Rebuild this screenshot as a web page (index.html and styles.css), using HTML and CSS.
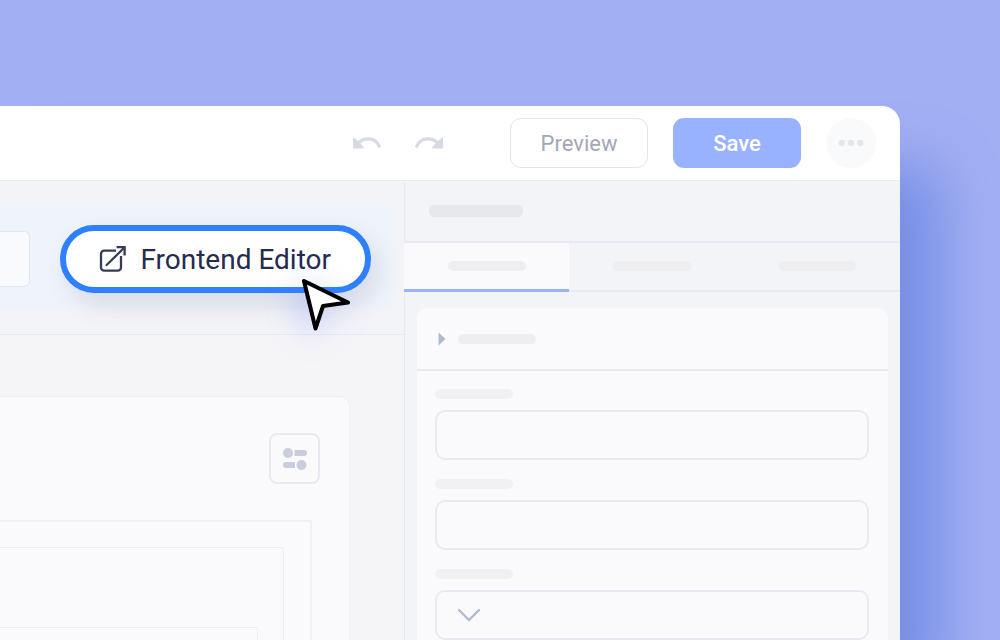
FILE: index.html
```html
<!DOCTYPE html>
<html lang="en">
<head>
    <meta charset="UTF-8">
    <meta name="viewport" content="width=device-width, initial-scale=1.0">
    <title>Frontend Editor</title>
    <link rel="stylesheet" href="styles.css">
</head>
<body>
    <div class="window">
        <header class="topbar">
            <div class="history">
                <button class="icon-btn" type="button" aria-label="Undo">
                    <svg width="28" height="12" viewBox="0 0 28 12" fill="none">
                        <path d="M6 5.5C11 0.5 22 -0.5 26.3 9.3" stroke="currentColor" stroke-width="3.2" stroke-linecap="round"/>
                        <path d="M0 1.8C0 0.8 1 0.6 1.8 1.2L4.5 3.6L10.2 9.4C11.2 10.4 10.8 11.6 9.4 11.6H1C0.4 11.6 0 11.2 0 10.6Z" fill="currentColor"/>
                    </svg>
                </button>
                <button class="icon-btn" type="button" aria-label="Redo">
                    <svg width="28" height="12" viewBox="0 0 28 12" fill="none">
                        <path d="M22 5.5C17 0.5 6 -0.5 1.7 9.3" stroke="currentColor" stroke-width="3.2" stroke-linecap="round"/>
                        <path d="M28 1.8C28 0.8 27 0.6 26.2 1.2L23.5 3.6L17.8 9.4C16.8 10.4 17.2 11.6 18.6 11.6H27C27.6 11.6 28 11.2 28 10.6Z" fill="currentColor"/>
                    </svg>
                </button>
            </div>
            <div class="actions">
                <button class="btn btn-preview" type="button">Preview</button>
                <button class="btn btn-save" type="button">Save</button>
                <button class="btn-more" type="button" aria-label="More options">
                    <svg width="26" height="8" viewBox="0 0 26 8" fill="currentColor">
                        <circle cx="3.7" cy="4" r="3.2"/>
                        <circle cx="13" cy="4" r="3.2"/>
                        <circle cx="22.3" cy="4" r="3.2"/>
                    </svg>
                </button>
            </div>
        </header>

        <div class="workspace">
            <main class="main">
                <div class="toolbar">
                    <div class="toolbar-band">
                        <button class="btn-blank" type="button" aria-label="Page settings"></button>
                        <div class="editor-wrap">
                            <button class="btn-editor" type="button">
                                <svg width="28" height="28" viewBox="0 0 28 28" fill="none" stroke="#363c57" stroke-width="2.3">
                                    <path d="M17 5.7H5.2A3.2 3.2 0 0 0 2 8.9V22.4A3.2 3.2 0 0 0 5.2 25.6H18.8A3.2 3.2 0 0 0 22 22.4V11"/>
                                    <path d="M7.6 20L25.2 2.8" stroke-linecap="round"/>
                                    <path d="M17.6 2.2H25.6V10.4"/>
                                </svg>
                                Frontend Editor
                            </button>
                            <svg class="pointer" width="50" height="54" viewBox="0 0 50 54">
                                <path d="M3 3L47 24.5L22 28L14.5 50.5Z" fill="#fff" stroke="#000" stroke-width="4" stroke-linejoin="round"/>
                            </svg>
                        </div>
                    </div>
                </div>
                <div class="canvas">
                    <section class="page-card">
                        <button class="btn-toggles" type="button" aria-label="Block options">
                            <svg width="24" height="22" viewBox="0 0 24 22" fill="currentColor">
                                <circle cx="5" cy="5" r="5"/>
                                <path d="M11.5 2H21A3 3 0 0 1 21 8H11.5Z"/>
                                <path d="M12 14H3A3 3 0 0 0 3 20H12Z"/>
                                <circle cx="18.5" cy="17" r="5"/>
                            </svg>
                        </button>
                        <div class="block block-outer">
                            <div class="block block-middle">
                                <div class="block block-inner"></div>
                            </div>
                        </div>
                    </section>
                </div>
            </main>

            <aside class="sidebar">
                <div class="sidebar-head">
                    <span class="bar bar-title"></span>
                </div>
                <div class="tabs" role="tablist">
                    <button class="tab tab-active" type="button" role="tab" aria-selected="true" aria-label="Content"><span class="bar"></span></button>
                    <button class="tab" type="button" role="tab" aria-selected="false" aria-label="Design"><span class="bar"></span></button>
                    <button class="tab" type="button" role="tab" aria-selected="false" aria-label="Advanced"><span class="bar"></span></button>
                </div>
                <section class="panel">
                    <button class="panel-head" type="button" aria-label="Toggle section">
                        <svg width="8" height="14" viewBox="0 0 8 14" fill="#b3b9d0">
                            <path d="M0.5 0.5L7.5 7L0.5 13.5Z"/>
                        </svg>
                        <span class="bar"></span>
                    </button>
                    <form class="fields">
                        <div class="field">
                            <label for="field-title" aria-label="Title"><span class="bar bar-light"></span></label>
                            <input class="control" id="field-title" type="text">
                        </div>
                        <div class="field">
                            <label for="field-link" aria-label="Link"><span class="bar bar-light"></span></label>
                            <input class="control" id="field-link" type="text">
                        </div>
                        <div class="field">
                            <label for="field-style" aria-label="Style"><span class="bar bar-light"></span></label>
                            <div class="select-wrap">
                                <select class="control" id="field-style">
                                    <option value=""></option>
                                </select>
                                <svg class="chevron" width="24" height="14" viewBox="0 0 24 14" fill="none" stroke="#b3b9d0" stroke-width="2.4" stroke-linecap="round">
                                    <path d="M2 2L12 12L22 2"/>
                                </svg>
                            </div>
                        </div>
                    </form>
                </section>
            </aside>
        </div>
    </div>
</body>
</html>
```
FILE: styles.css
```css
:root {
    --page-bg: #a3aff3;
    --surface: #fafafc;
    --muted-bg: #f3f4f8;
    --line: #e8e9f3;
    --accent: #2f80ff;
    --accent-soft: #99b2ff;
}

* {
    box-sizing: border-box;
}

body {
    margin: 0;
    height: 100vh;
    padding: 106px 100px 0 0;
    overflow: hidden;
    background-color: var(--page-bg);
    font-family: Roboto, "Liberation Sans", sans-serif;
}

button {
    margin: 0;
    padding: 0;
    border: 0;
    background: none;
    font-family: inherit;
    cursor: pointer;
}

svg {
    display: block;
    flex-shrink: 0;
}

.window {
    display: flex;
    flex-direction: column;
    height: 100%;
    border-top-right-radius: 18px;
    background-color: #fff;
    box-shadow: 40px 60px 60px 0 #758ee4;
}

/* Top bar */
.topbar {
    display: flex;
    align-items: center;
    justify-content: flex-end;
    gap: 67px;
    padding: 12px 24px 12px 0;
    border-bottom: 1px solid #ebecf1;
}

.history {
    display: flex;
    gap: 34px;
}

.icon-btn {
    color: #d5dae6;
}

.actions {
    display: flex;
    align-items: center;
    gap: 25px;
}

.btn {
    height: 50px;
    border-radius: 11px;
    font-size: 22px;
}

.btn-preview {
    width: 138px;
    border: 1px solid #e4e5e9;
    color: #a4a7b5;
}

.btn-save {
    width: 128px;
    background-color: var(--accent-soft);
    color: #fff;
    font-weight: 500;
}

.btn-more {
    display: flex;
    align-items: center;
    justify-content: center;
    width: 50px;
    height: 50px;
    border-radius: 50%;
    background-color: #f9fafc;
    color: #e6e7ea;
}

.workspace {
    display: grid;
    grid-template-columns: 1fr 31rem;
    flex: 1;
    min-height: 0;
}

/* Left side */
.main {
    display: flex;
    flex-direction: column;
    min-height: 0;
    background-color: #f5f5f8;
}

.toolbar {
    padding: 25px 12px 25px 0;
    border-bottom: 1px solid var(--line);
    background-color: var(--muted-bg);
}

.toolbar-band {
    display: flex;
    align-items: center;
    gap: 30px;
    padding: 19px 21px 16px 0;
    background-color: #eff3fc;
}

.btn-blank {
    flex: 1;
    height: 56px;
    border: 1px solid #e0e6f2;
    border-left: 0;
    border-radius: 0 6px 6px 0;
    background-color: #f8fafd;
}

.editor-wrap {
    position: relative;
}

.btn-editor {
    display: flex;
    align-items: center;
    gap: 13px;
    height: 68px;
    padding: 0 34px 0 33px;
    border: 6px solid var(--accent);
    border-radius: 34px;
    background-color: #fff;
    box-shadow: 8px 12px 24px rgba(70, 80, 90, 0.14);
    color: #262c50;
    font-size: 28px;
    white-space: nowrap;
}

.pointer {
    position: absolute;
    right: 20px;
    bottom: -39px;
    z-index: 1;
    filter: drop-shadow(-6px 6px 16px rgba(90, 110, 255, 0.35));
}

.canvas {
    flex: 1;
    display: flex;
    min-height: 0;
    padding: 61px 54px 0 0;
}

.page-card {
    display: flex;
    flex: 1;
    flex-direction: column;
    align-items: flex-end;
    gap: 36px;
    padding-top: 36px;
    border: 1px solid #f0f0f4;
    border-width: 1px 1px 0 0;
    border-top-right-radius: 10px;
    background-color: var(--surface);
}

.btn-toggles {
    display: flex;
    align-items: center;
    justify-content: center;
    width: 51px;
    height: 51px;
    margin-right: 29px;
    border: 2px solid var(--line);
    border-radius: 8px;
    color: #c9cddc;
}

.block {
    border: 1px solid #ecedf4;
    border-width: 1px 1px 0 0;
    border-top-right-radius: 3px;
}

.block-outer {
    display: flex;
    flex: 1;
    align-self: stretch;
    margin-right: 37px;
    padding: 25px 26px 0 0;
    border-color: #f0f0f5;
    border-width: 2px 2px 0 0;
}

.block-middle {
    display: flex;
    flex: 1;
    padding: 79px 25px 0 0;
}

.block-inner {
    flex: 1;
}

/* Sidebar */
.sidebar {
    display: flex;
    flex-direction: column;
    min-height: 0;
    overflow: hidden;
    background-color: var(--muted-bg);
    box-shadow: inset 1px 0 var(--line);
}

.bar {
    display: block;
    width: 78px;
    height: 10px;
    border-radius: 5px;
    background-color: #eeeef0;
}

.bar-title {
    width: 94px;
    height: 12px;
    background-color: #e4e7eb;
}

.bar-light {
    background-color: #f1f1f3;
}

.sidebar-head {
    padding: 24px 25px;
    border-bottom: 2px solid var(--line);
}

.tabs {
    display: grid;
    grid-template-columns: repeat(3, 1fr);
    flex-shrink: 0;
    height: 49px;
    box-shadow: inset 0 -2px var(--line);
}

.tab {
    display: flex;
    align-items: center;
    justify-content: center;
    border-bottom: 3px solid transparent;
}

.tab-active {
    border-color: var(--accent-soft);
    background-color: var(--surface);
}

.panel {
    flex: 1;
    margin: 16px 12px 0 13px;
    border-radius: 10px 10px 0 0;
    background-color: var(--surface);
}

.panel-head {
    display: flex;
    align-items: center;
    gap: 12px;
    width: 100%;
    height: 63px;
    padding-left: 21px;
    border-bottom: 2px solid var(--line);
}

.fields {
    display: flex;
    flex-direction: column;
    gap: 19px;
    padding: 18px 19px 0 18px;
}

.field {
    display: flex;
    flex-direction: column;
    gap: 11px;
}

.control {
    display: block;
    width: 100%;
    height: 50px;
    padding: 0 20px;
    border: 2px solid var(--line);
    border-radius: 10px;
    appearance: none;
    background-color: transparent;
    color: #262c50;
    font-family: inherit;
    font-size: 22px;
}

.select-wrap {
    position: relative;
}

.chevron {
    position: absolute;
    top: 18px;
    left: 22px;
    pointer-events: none;
}
```
